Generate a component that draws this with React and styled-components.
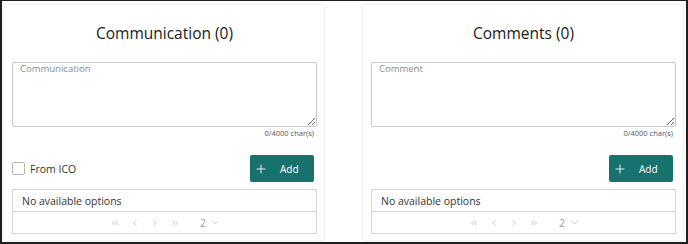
import React from "react";
import styled, { createGlobalStyle } from "styled-components";
import { ChevronsLeft, ChevronLeft, ChevronRight, ChevronsRight, ChevronDown, Plus } from "lucide-react";

const Global = createGlobalStyle`
  html, body { margin: 0; padding: 0; background: #fff; }
  * { box-sizing: border-box; }
  body { font-family: "Open Sans", "Noto Sans", sans-serif; }
`;

const Frame = styled.div`
  width: 688px;
  height: 244px;
  border: 2px solid #1e1e1e;
  border-top-width: 1px;
  background: #fff;
  display: flex;
  gap: 39px;
  padding: 4px 3px 2px 2px;
`;

const Card = styled.div`
  flex: 1;
  background: #fff;
  box-shadow: 0 0 3px rgba(0, 0, 0, 0.14);
  padding: 0 7px 6px 8px;
  display: flex;
  flex-direction: column;
`;

const Title = styled.h2`
  margin: 0;
  height: 57px;
  display: flex;
  align-items: center;
  justify-content: center;
  font-size: 15.5px;
  font-weight: 400;
  color: #1a1a1a;
  padding-bottom: 2px;
`;

const TextArea = styled.textarea`
  width: 100%;
  height: 65px;
  border: 1px solid #c8c8c8;
  border-radius: 2px;
  font-family: "Open Sans", sans-serif;
  font-size: 9.5px;
  padding: 0 7px;
  line-height: 12px;
  resize: vertical;
  display: block;
  &::placeholder { color: #8a8a8a; }
`;

const Counter = styled.div`
  text-align: right;
  font-size: 7.5px;
  color: #555;
  padding-right: 3px;
  margin-top: 1px;
  line-height: 10px;
`;

const ActionRow = styled.div`
  display: flex;
  align-items: center;
  justify-content: space-between;
  margin-top: 17px;
  padding-right: 3px;
  height: 27px;
`;

const CheckLabel = styled.label`
  display: flex;
  align-items: center;
  gap: 5px;
  font-size: 10.5px;
  color: #333;
`;

const Box = styled.span`
  width: 13px;
  height: 13px;
  border: 1px solid #b5b5b5;
  border-radius: 2px;
  display: inline-block;
`;

const AddButton = styled.button`
  margin-left: auto;
  width: 64px;
  height: 27px;
  background: #17726e;
  border: none;
  border-radius: 2px;
  color: #fff;
  display: flex;
  align-items: center;
  padding: 0 0 0 4px;
  gap: 12px;
  font-family: "Open Sans", sans-serif;
  font-size: 10px;
`;

const List = styled.div`
  margin-top: 7px;
  border: 1px solid #d6d6d6;
  display: flex;
  flex-direction: column;
`;

const Empty = styled.div`
  height: 22px;
  border-bottom: 1px solid #d6d6d6;
  display: flex;
  align-items: center;
  padding-left: 9px;
  font-size: 10.5px;
  color: #333;
`;

const Pager = styled.div`
  height: 21px;
  display: flex;
  align-items: center;
  justify-content: center;
  gap: 10px;
  color: #9e9e9e;
  padding-left: 2px;
`;

const PageNum = styled.span`
  font-size: 10.5px;
  color: #9e9e9e;
  margin-left: 10px;
  display: flex;
  align-items: center;
  gap: 4px;
`;

const iconProps = { size: 10, strokeWidth: 1.3, color: "#9e9e9e" };

function Panel({ title, placeholder, withCheckbox }) {
  return (
    <Card>
      <Title>{title}</Title>
      <TextArea placeholder={placeholder} />
      <Counter>0/4000 char(s)</Counter>
      <ActionRow>
        {withCheckbox && (
          <CheckLabel>
            <Box />
            From ICO
          </CheckLabel>
        )}
        <AddButton>
          <Plus size={14} strokeWidth={1.5} />
          Add
        </AddButton>
      </ActionRow>
      <List>
        <Empty>No available options</Empty>
        <Pager>
          <ChevronsLeft {...iconProps} />
          <ChevronLeft {...iconProps} />
          <ChevronRight {...iconProps} />
          <ChevronsRight {...iconProps} />
          <PageNum>
            2
            <ChevronDown {...iconProps} size={11} />
          </PageNum>
        </Pager>
      </List>
    </Card>
  );
}

export default function App() {
  return (
    <>
      <Global />
      <Frame>
        <Panel title="Communication (0)" placeholder="Communication" withCheckbox />
        <Panel title="Comments (0)" placeholder="Comment" />
      </Frame>
    </>
  );
}
